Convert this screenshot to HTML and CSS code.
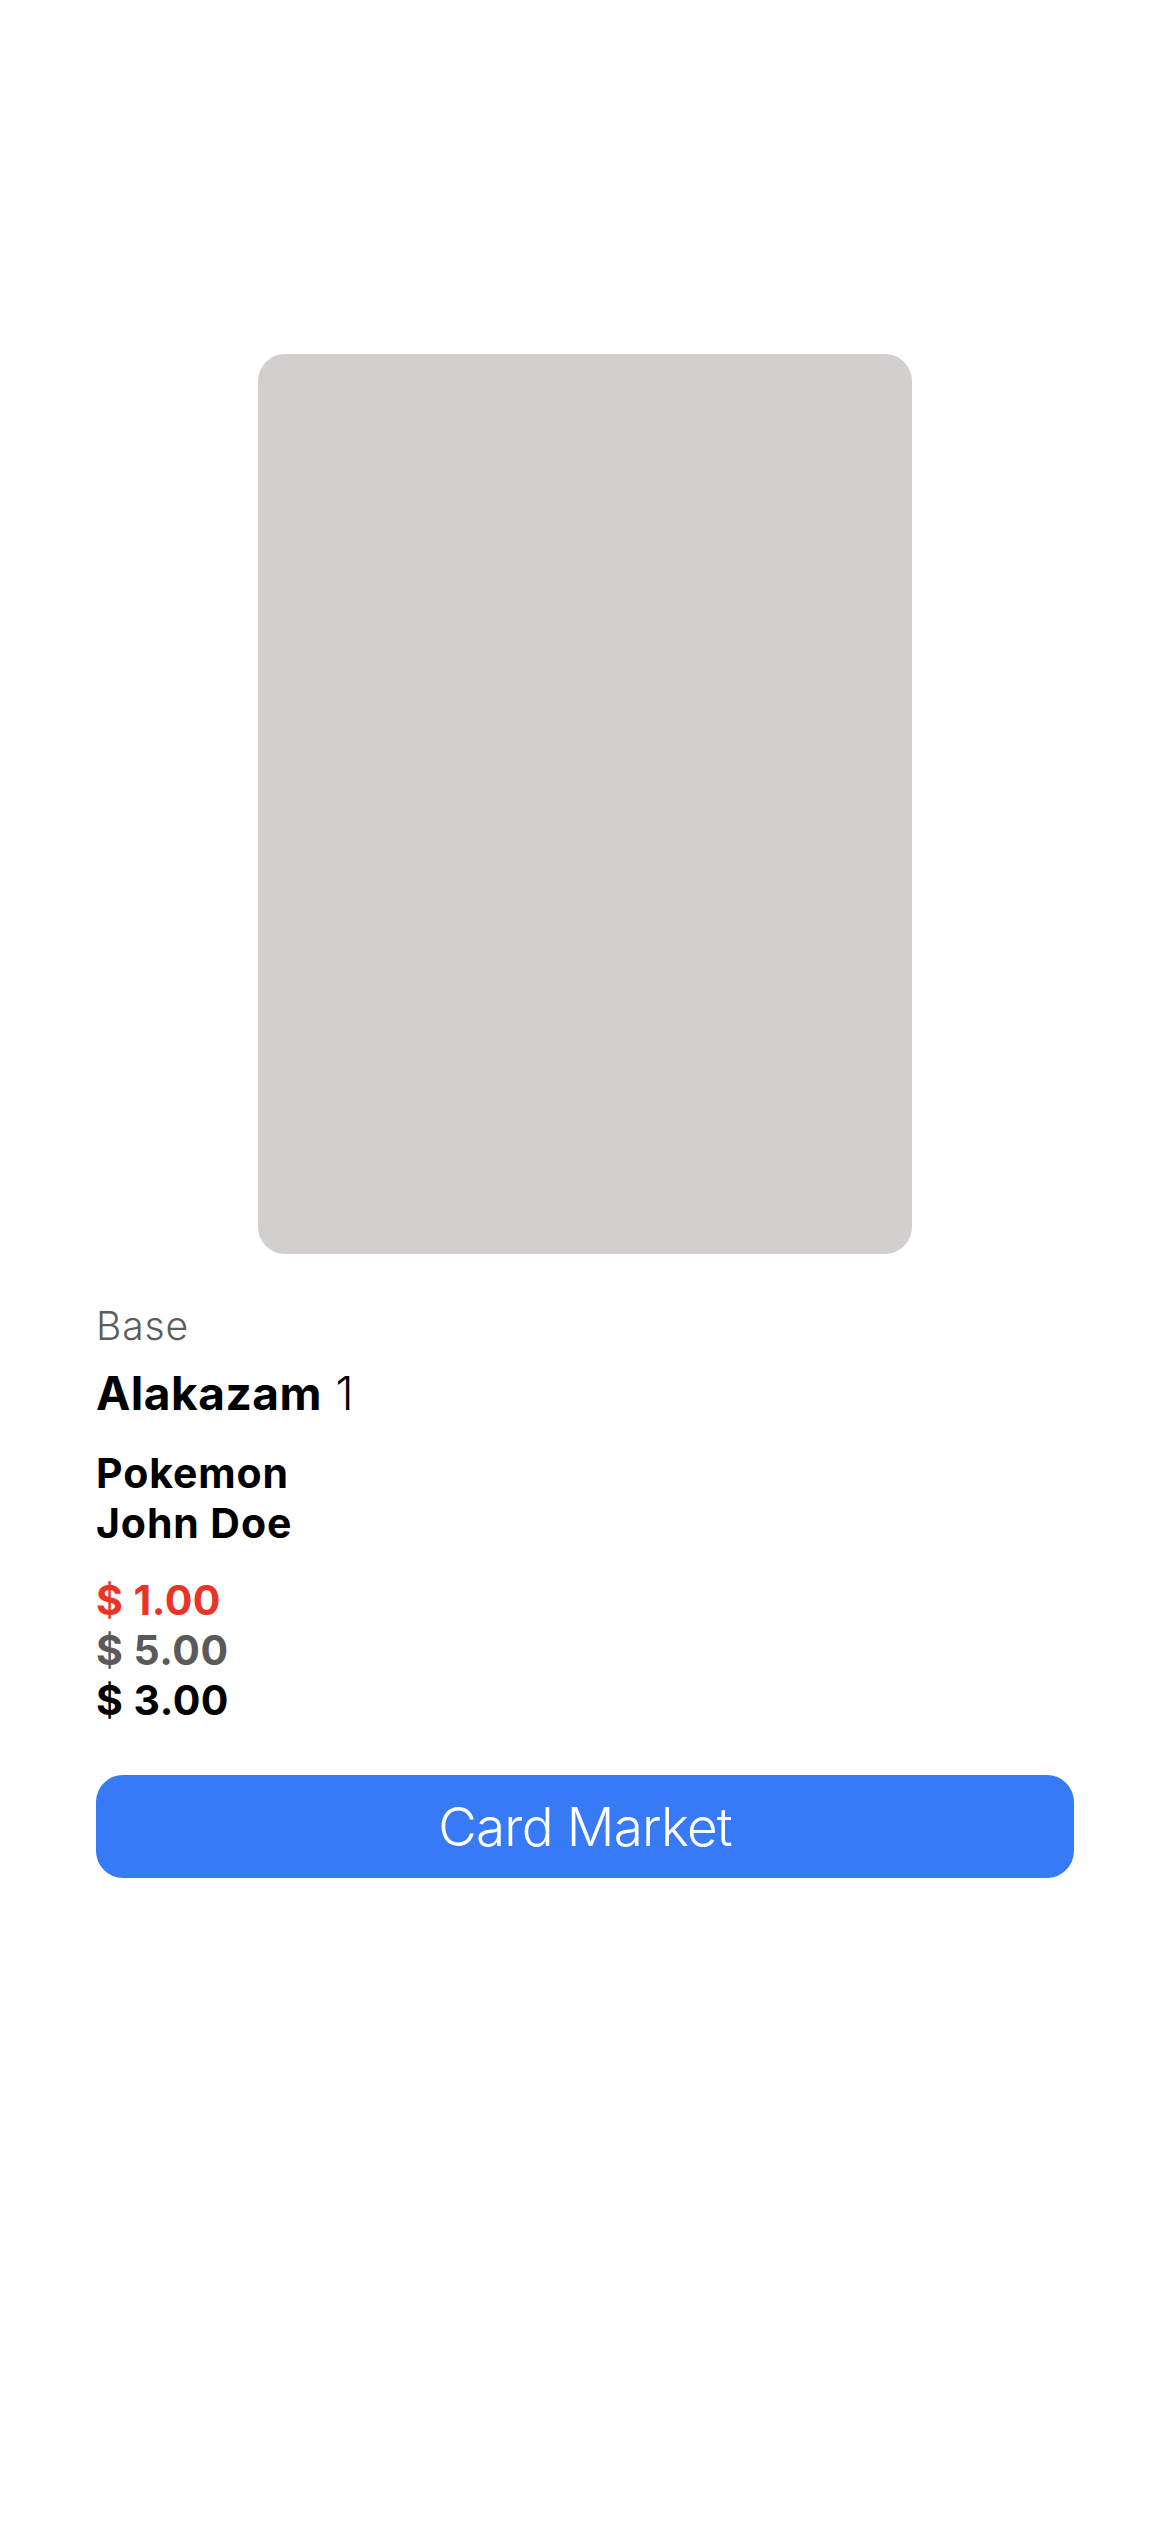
FILE: index.html
```html
<!DOCTYPE html>
<html lang="en">
<head>
<meta charset="utf-8">
<title>Alakazam</title>
<link rel="stylesheet" href="styles.css">
</head>
<body>
<main class="screen">
  <div class="card-image"></div>
  <section class="info">
    <div class="set">Base</div>
    <div class="title"><span class="name">Alakazam</span> <span class="number">1</span></div>
    <div class="meta">
      <div>Pokemon</div>
      <div>John Doe</div>
    </div>
    <div class="prices">
      <div class="price low">$ 1.00</div>
      <div class="price high">$ 5.00</div>
      <div class="price mid">$ 3.00</div>
    </div>
    <button class="market">Card Market</button>
  </section>
</main>
</body>
</html>
```

FILE: styles.css
```css
html, body {
  margin: 0;
  padding: 0;
  background: #ffffff;
}

body {
  font-family: Inter, "Noto Sans", "Liberation Sans", sans-serif;
  color: #000000;
}

.screen {
  width: 1170px;
  min-height: 2532px;
  padding-top: 354px;
  box-sizing: border-box;
}

.card-image {
  width: 654px;
  height: 900px;
  margin: 0 auto;
  background: #d1d0ce;
  border-radius: 27px;
}

.info {
  padding: 49px 96px 0 96px;
  display: flex;
  flex-direction: column;
}

.set {
  font-size: 39px;
  line-height: 46px;
  font-weight: 300;
  color: #5c5c5c;
  letter-spacing: 0.9px;
}

.title {
  margin-top: 17px;
  font-size: 46px;
  line-height: 54px;
  letter-spacing: 0.5px;
}

.name {
  font-weight: 700;
}

.number {
  font-weight: 300;
}

.meta {
  margin-top: 28px;
  font-size: 41px;
  line-height: 50px;
  font-weight: 700;
  letter-spacing: 0.9px;
}

.prices {
  margin-top: 27px;
  font-size: 41px;
  line-height: 50px;
  font-weight: 700;
  letter-spacing: 0.5px;
}

.low { color: #ea3428; }
.high { color: #5a5a5a; }
.mid { color: #000000; }

.market {
  margin-top: 50px;
  width: 978px;
  height: 103px;
  border: none;
  border-radius: 27px;
  background: #377af5;
  color: #ffffff;
  font-family: Inter, "Noto Sans", "Liberation Sans", sans-serif;
  font-size: 53px;
  font-weight: 300;
  letter-spacing: -0.8px;
  padding: 0;
}
```
